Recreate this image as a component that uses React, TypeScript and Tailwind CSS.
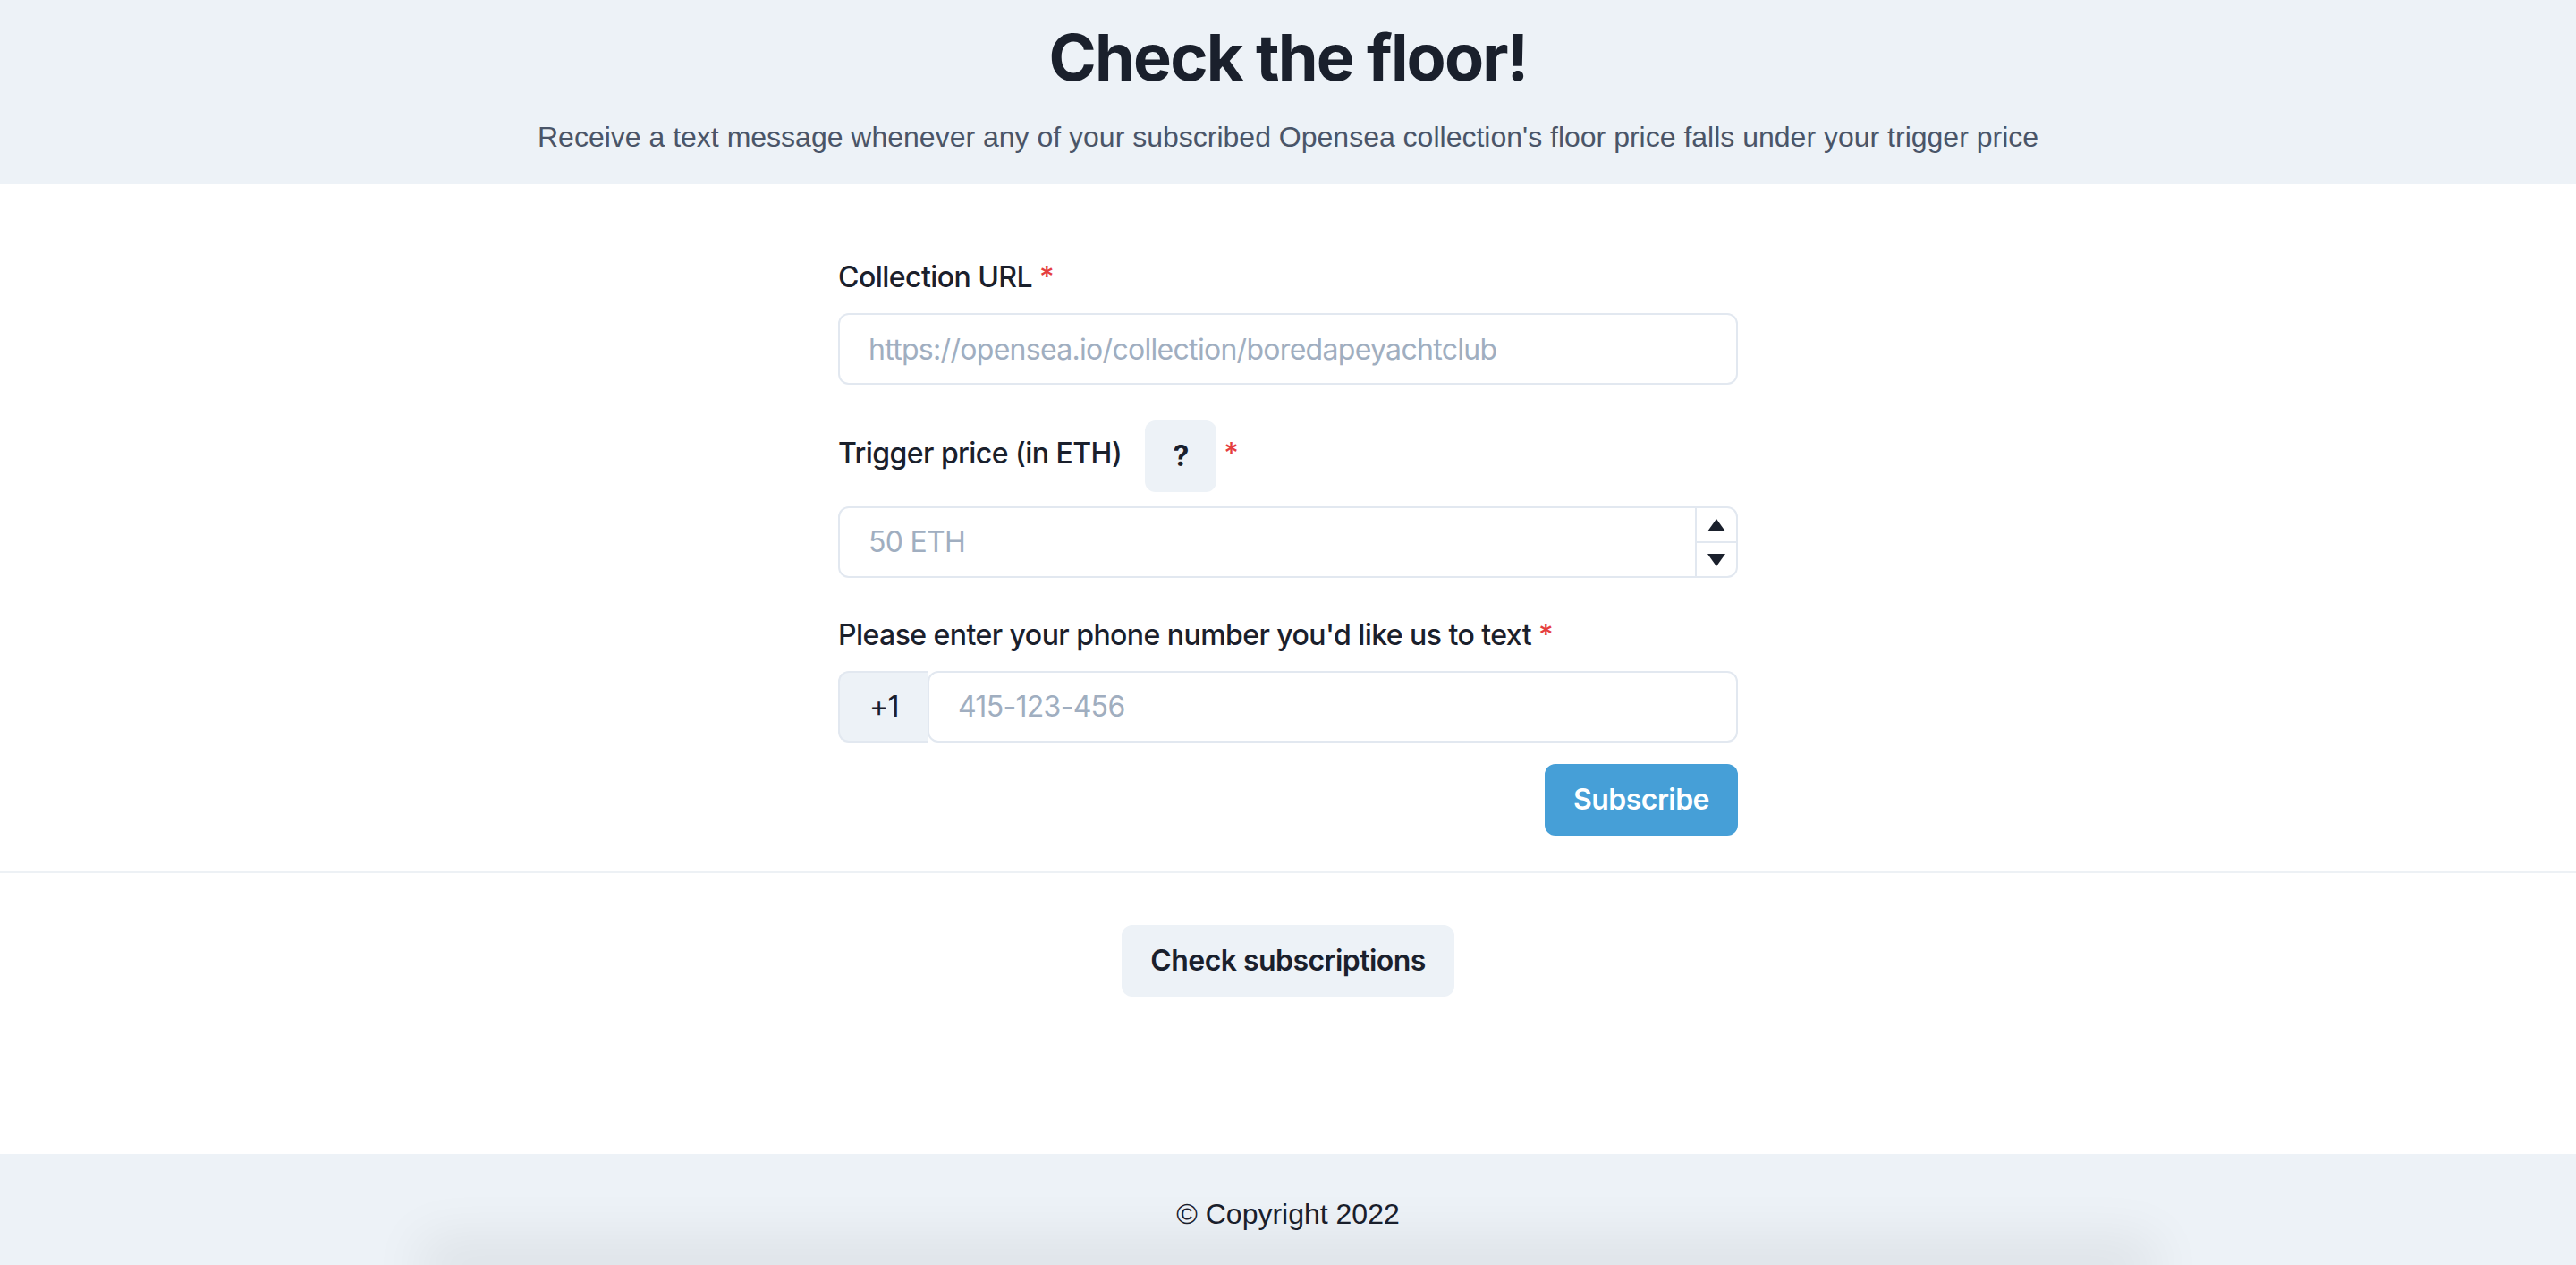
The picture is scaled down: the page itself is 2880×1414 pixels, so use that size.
import React from "react";

function Asterisk() {
  return <span className="ml-[8px] text-[#e53e3e]">*</span>;
}

export default function App() {
  return (
    <div className="font-['Inter',sans-serif] text-[#1a202c] bg-white tracking-[-0.55px]">
      <header className="bg-[#edf2f7] pt-[21px] pb-[29px] text-center">
        <h1 className="text-[72px] leading-[86px] font-bold tracking-[-1.8px]">Check the floor!</h1>
        <p className="mt-[22px] text-[32px] leading-[48px] tracking-normal text-[#4a5568] font-['Liberation_Sans',Arial,sans-serif]">
          Receive a text message whenever any of your subscribed Opensea collection's floor price falls under your trigger price
        </p>
      </header>

      <main className="pt-[80px]">
        <div className="mx-auto w-[1006px] flex flex-col">
          {/* Collection URL */}
          <label className="text-[32px] leading-[48px] font-medium mb-[16px]">
            Collection URL<Asterisk />
          </label>
          <input
            type="text"
            placeholder="https://opensea.io/collection/boredapeyachtclub"
            className="h-[80px] w-full rounded-[12px] border-2 border-[#e2e8f0] px-[32px] text-[32px] tracking-[-0.7px] outline-none placeholder:text-[#a0aec0]"
          />

          {/* Trigger price */}
          <div className="mt-[40px] mb-[16px] flex h-[80px] items-center">
            <span className="mb-[7px] text-[32px] leading-[48px] font-medium">Trigger price (in ETH)</span>
            <button className="ml-[26px] flex h-[80px] w-[80px] items-center justify-center rounded-[12px] bg-[#edf2f7] text-[32px] font-bold">
              ?
            </button>
            <span className="mb-[7px] text-[32px] leading-[48px] font-medium">
              <Asterisk />
            </span>
          </div>
          <div className="flex h-[80px] w-full overflow-hidden rounded-[12px] border-2 border-[#e2e8f0]">
            <input
              type="text"
              placeholder="50 ETH"
              className="min-w-0 flex-1 px-[32px] text-[32px] tracking-[-0.7px] outline-none placeholder:text-[#a0aec0]"
            />
            <div className="flex w-[46px] flex-col border-l-2 border-[#e2e8f0]">
              <div className="flex flex-1 items-center justify-center">
                <svg width="20" height="14" viewBox="0 0 20 14">
                  <polygon points="10,0 20,14 0,14" fill="#1a202c" />
                </svg>
              </div>
              <div className="flex flex-1 items-center justify-center border-t-2 border-[#e2e8f0]">
                <svg width="20" height="14" viewBox="0 0 20 14">
                  <polygon points="0,0 20,0 10,14" fill="#1a202c" />
                </svg>
              </div>
            </div>
          </div>

          {/* Phone */}
          <label className="mt-[40px] mb-[16px] text-[32px] leading-[48px] font-medium">
            Please enter your phone number you'd like us to text<Asterisk />
          </label>
          <div className="flex h-[80px] w-full">
            <div className="flex w-[100px] items-center rounded-l-[12px] border-2 border-r-0 border-[#e2e8f0] bg-[#edf2f7] px-[33px] text-[32px]">
              +1
            </div>
            <input
              type="text"
              placeholder="415-123-456"
              className="min-w-0 flex-1 rounded-[12px] border-2 border-[#e2e8f0] px-[32px] text-[32px] tracking-[-0.7px] outline-none placeholder:text-[#a0aec0]"
            />
          </div>

          <div className="mt-[24px] flex justify-end">
            <button className="h-[80px] rounded-[12px] bg-[#469fd7] px-[32px] text-[32px] font-semibold text-white">
              Subscribe
            </button>
          </div>
        </div>

        <div className="mt-[40px] h-[2px] bg-[#edf1f5]" />

        <div className="flex justify-center pt-[58px] pb-[176px]">
          <button className="h-[80px] rounded-[12px] bg-[#edf2f7] px-[32px] text-[32px] font-semibold text-[#1a202c]">
            Check subscriptions
          </button>
        </div>
      </main>

      <footer className="flex flex-col bg-[#edf2f7] pt-[43px] text-center">
        <p className="text-[32px] leading-[48px] tracking-normal font-['Liberation_Sans',Arial,sans-serif]">© Copyright 2022</p>
        <div className="mx-auto mt-[33px] h-0 w-[1880px] shadow-[0_0_60px_30px_rgba(0,0,0,0.07)]" />
      </footer>
    </div>
  );
}
